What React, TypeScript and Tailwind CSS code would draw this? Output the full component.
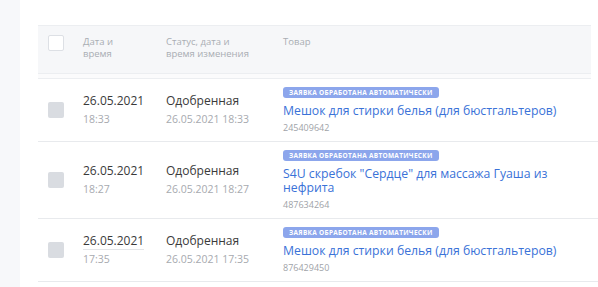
import React from 'react';

type Row = {
  date: string;
  time: string;
  status: string;
  changed: string;
  title: string;
  sku: string;
  underline?: boolean;
};

const rows: Row[] = [
  {
    date: '26.05.2021',
    time: '18:33',
    status: 'Одобренная',
    changed: '26.05.2021 18:33',
    title: 'Мешок для стирки белья (для бюстгальтеров)',
    sku: '245409642',
  },
  {
    date: '26.05.2021',
    time: '18:27',
    status: 'Одобренная',
    changed: '26.05.2021 18:27',
    title: 'S4U скребок "Сердце" для массажа Гуаша из нефрита',
    sku: '487634264',
  },
  {
    date: '26.05.2021',
    time: '17:35',
    status: 'Одобренная',
    changed: '26.05.2021 17:35',
    title: 'Мешок для стирки белья (для бюстгальтеров)',
    sku: '876429450',
    underline: true,
  },
];

function Checkbox({ header }: { header?: boolean }) {
  return header ? (
    <div className="w-4 h-4 rounded-[2px] border border-[#dde0e5] bg-white" />
  ) : (
    <div className="w-4 h-4 rounded-[2px] bg-[#d9dce1]" />
  );
}

export default function App() {
  return (
    <div
      className="flex w-[598px] h-[287px] overflow-hidden bg-white"
      style={{ fontFamily: '"Open Sans", "Noto Sans", sans-serif' }}
    >
      {/* left rail */}
      <div className="w-[20px] shrink-0 bg-[#f7f8fa]" />

      <div className="flex-1 pl-[18px] pt-[25px] min-w-0">
        {/* Header */}
        <div className="w-[553px]">
          <div className="flex items-start h-[49px] border-y border-[#eceef1] bg-[#f6f7f9] text-[9.5px] leading-[12px] text-[#a9adb3]">
            <div className="w-[45px] pl-[10px] pt-[9px]">
              <Checkbox header />
            </div>
            <div className="w-[83px] pt-[10px]">
              <div>Дата и</div>
              <div>время</div>
            </div>
            <div className="w-[117px] pt-[10px]">
              <div>Статус, дата и</div>
              <div>время изменения</div>
            </div>
            <div className="pt-[10px]">Товар</div>
          </div>
          <div className="h-[5px] bg-[#fbfbfc] border-b border-[#eceef1]" />
        </div>

        {/* Rows */}
        <div className="w-[600px]">
          {rows.map((r) => (
            <div key={r.sku} className="flex items-stretch border-b border-[#e8eaed]">
              <div className="w-[45px] pl-[10px] flex items-center">
                <Checkbox />
              </div>
              <div className="w-[83px] flex flex-col justify-center">
                <div className="text-[12px] leading-[16px] text-[#3a3a3a]">
                  <span className={r.underline ? 'border-b border-[#e3e5e8]' : ''}>{r.date}</span>
                </div>
                <div className="mt-[2px] text-[10.5px] leading-[16px] text-[#a7aaaf]">{r.time}</div>
              </div>
              <div className="w-[117px] flex flex-col justify-center">
                <div className="text-[12px] leading-[16px] text-[#3a3a3a]">{r.status}</div>
                <div className="mt-[2px] text-[10.5px] leading-[16px] text-[#a7aaaf]">{r.changed}</div>
              </div>
              <div className="w-[290px] pt-[8px] pb-[7px] leading-none">
                <div className="flex w-fit items-center h-[11px] px-[6px] rounded-[3px] bg-[#8ca6ec] text-[6.5px] leading-[11px] font-bold tracking-[0.3px] uppercase text-white">
                  Заявка обработана автоматически
                </div>
                <div className="mt-[6px] text-[12.25px] leading-[14px] text-[#3a72d8]">{r.title}</div>
                <div className="mt-[4px] text-[9px] leading-[12px] text-[#a0a3a8]">{r.sku}</div>
              </div>
            </div>
          ))}
        </div>
      </div>
    </div>
  );
}
